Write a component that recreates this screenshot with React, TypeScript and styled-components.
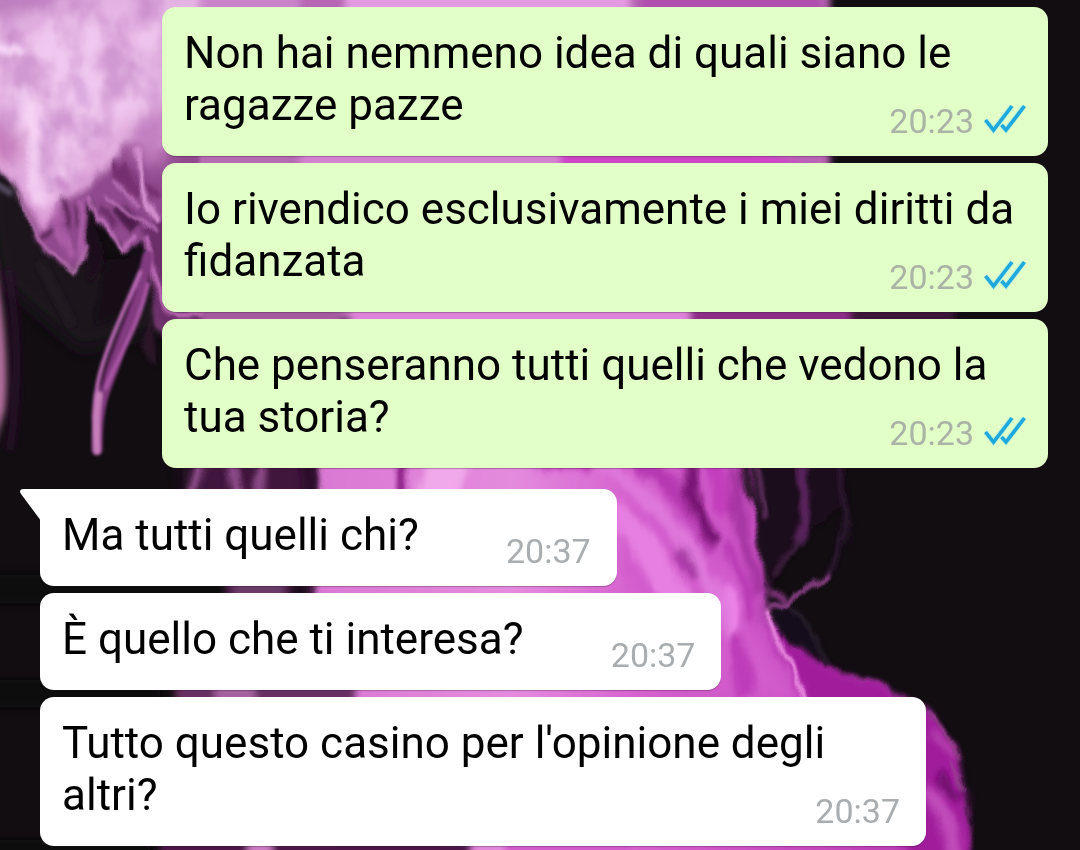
import React from "react";
import styled, { createGlobalStyle } from "styled-components";

const GlobalStyle = createGlobalStyle`
  * { box-sizing: border-box; }
  body {
    margin: 0;
    background: #110d11;
    font-family: Roboto, "Liberation Sans", sans-serif;
  }
`;

type Side = "sent" | "received";

interface Message {
  text: string;
  time: string;
}

const sent: Message[] = [
  { text: "Non hai nemmeno idea di quali siano le ragazze pazze", time: "20:23" },
  { text: "Io rivendico esclusivamente i miei diritti da fidanzata", time: "20:23" },
  { text: "Che penseranno tutti quelli che vedono la tua storia?", time: "20:23" },
];

const received: Message[] = [
  { text: "Ma tutti quelli chi?", time: "20:37" },
  { text: "È quello che ti interesa?", time: "20:37" },
  { text: "Tutto questo casino per l'opinione degli altri?", time: "20:37" },
];

const Chat = styled.main`
  position: relative;
  isolation: isolate;
  overflow: hidden;
  min-height: 100vh;
  display: flex;
  flex-direction: column;
  gap: 21px;
  padding: 7px 32px 4px 40px;
`;

const Wallpaper = styled.svg`
  position: absolute;
  inset: 0;
  width: 100%;
  height: 100%;
  z-index: -1;
`;

const Group = styled.ol<{ $side: Side }>`
  list-style: none;
  margin: 0;
  padding: 0;
  display: flex;
  flex-direction: column;
  align-items: ${(p) => (p.$side === "sent" ? "flex-end" : "flex-start")};
  gap: 7px;
`;

const Bubble = styled.li<{ $side: Side; $tail: boolean }>`
  position: relative;
  display: grid;
  max-width: calc(100% - 122px);
  padding: 20px 22px 15px 22px;
  border-radius: ${(p) => (p.$tail ? "0 14px 14px 14px" : "14px")};
  background: ${(p) => (p.$side === "sent" ? "#e1ffc7" : "#ffffff")};
  color: ${(p) => (p.$side === "sent" ? "#a9b3a6" : "#a9adaf")};
  box-shadow: 0 1px 1px rgba(40, 20, 40, 0.3);
`;

const Text = styled.p`
  grid-area: 1 / 1;
  margin: 0 0 10px;
  color: #000;
  font-size: 44px;
  line-height: 52px;
`;

/* Keeps the end of the last line clear of the time. */
const Reserve = styled.span<{ $side: Side }>`
  display: inline-block;
  width: ${(p) => (p.$side === "sent" ? 200 : 176)}px;
`;

const Meta = styled.footer<{ $side: Side }>`
  grid-area: 1 / 1;
  place-self: end;
  display: flex;
  align-items: center;
  gap: 10px;
  padding-right: ${(p) => (p.$side === "sent" ? 0 : 4)}px;
  font-size: 34px;
  line-height: 40px;
`;

const Ticks = styled.svg`
  width: 42px;
  height: 34px;
`;

const Tail = styled.svg`
  position: absolute;
  top: 0;
  left: -20px;
  width: 21px;
  height: 31px;
`;

function ReadTicks() {
  return (
    <Ticks viewBox="0 0 42 34" role="img" aria-label="Letto">
      <g fill="none" stroke="#8fe3f5" strokeWidth="5.500" opacity="0.45">
        <path d="M1.500 16 9.500 26 28 2" />
        <path d="M17.500 21 22 26 40 2" />
      </g>
      <g fill="none" stroke="#1fa8dc" strokeWidth="3.600">
        <path d="M1.500 16 9.500 26 28 2" />
        <path d="M17.500 21 22 26 40.500 2" />
      </g>
    </Ticks>
  );
}

function Messages({ items, side }: { items: Message[]; side: Side }) {
  return (
    <Group $side={side}>
      {items.map((m, i) => {
        const tail = side === "received" && i === 0;
        return (
          <Bubble key={m.text} $side={side} $tail={tail}>
            {tail && (
              <Tail viewBox="0 0 21 31" aria-hidden="true">
                <path d="M21 0H3C0 0-.8 2.400 1 5L20 30.500H21Z" fill="#fff" />
              </Tail>
            )}
            <Text>
              {m.text}
              <Reserve $side={side} />
            </Text>
            <Meta $side={side}>
              <time>{m.time}</time>
              {side === "sent" && <ReadTicks />}
            </Meta>
          </Bubble>
        );
      })}
    </Group>
  );
}

function Blur({ id, amount }: { id: string; amount: number }) {
  return (
    <filter id={id} filterUnits="userSpaceOnUse" x="-60" y="-60" width="1200" height="970">
      <feGaussianBlur stdDeviation={amount} />
    </filter>
  );
}

function SmokeWallpaper() {
  return (
    <Wallpaper viewBox="0 0 1080 850" preserveAspectRatio="xMidYMid slice" aria-hidden="true">
      <defs>
        <Blur id="soft1" amount={1.4} />
        <Blur id="soft2" amount={2.2} />
        <Blur id="soft3" amount={3.5} />
        <Blur id="soft9" amount={9} />
        <filter
          id="wisps"
          filterUnits="userSpaceOnUse"
          x="-60"
          y="-60"
          width="1200"
          height="970"
          colorInterpolationFilters="sRGB"
        >
          <feTurbulence type="fractalNoise" baseFrequency="0.035 0.018" numOctaves="3" seed="7" result="noise" />
          <feDisplacementMap in="SourceGraphic" in2="noise" scale="18" xChannelSelector="R" yChannelSelector="G" />
        </filter>
        <filter id="mottle" filterUnits="userSpaceOnUse" x="-10" y="-10" width="200" height="260" colorInterpolationFilters="sRGB">
          <feTurbulence type="fractalNoise" baseFrequency="0.03 0.02" numOctaves="4" seed="3" />
          <feColorMatrix values="0 0 0 0 0.74  0 0 0 0 0.48  0 0 0 0 0.75  3 0 0 0 -1.250" />
          <feComposite in2="SourceGraphic" operator="in" />
          <feGaussianBlur stdDeviation="1.500" />
        </filter>
        <linearGradient id="cloud" x1="0" y1="0" x2="0" y2="1">
          <stop offset="0" stopColor="#d79ed6" />
          <stop offset="0.2" stopColor="#e6b6e5" />
          <stop offset="0.75" stopColor="#e2abde" />
          <stop offset="1" stopColor="#d691d0" />
        </linearGradient>
        <linearGradient id="body" x1="0" y1="0" x2="1" y2="0">
          <stop offset="0" stopColor="#d978d2" />
          <stop offset="0.3" stopColor="#e48bde" />
          <stop offset="0.5" stopColor="#d45fcd" />
          <stop offset="1" stopColor="#b634b1" />
        </linearGradient>
      </defs>
      <rect width="1080" height="850" fill="#110d11" />

      {/* dim haze left of the column */}
      <path d="M-20 160 26 190 60 240 110 272 165 255V330L80 350 0 280Z" fill="#1f171f" filter="url(#soft9)" />
      <path d="M-8 250C3 300 10 370 5 410L-8 450Z" fill="#b5709f" filter="url(#soft3)" />
      <path d="M8 270C18 330 20 380 10 450" stroke="#2b112a" strokeWidth="7" fill="none" filter="url(#soft3)" />
      <path d="M40 262 72 325" stroke="#231b24" strokeWidth="7" fill="none" filter="url(#soft3)" />
      <path d="M-4 184 12 194" stroke="#5a5066" strokeWidth="6" fill="none" filter="url(#soft2)" />

      {/* strips that show between the upper bubbles */}
      <g filter="url(#soft3)">
        <path d="M150-20H830V320H240L160 330Z" fill="#b765b4" />
        <path d="M150-20H300V12H150Z" fill="#c983cb" />
        <path d="M345-20H630V16H345Z" fill="#e49ae2" />
        <path d="M640-20H812L828 16H640Z" fill="#b04fae" />
        <path d="M172 148H300V172H172Z" fill="#b56cb2" />
        <path d="M300 148H560V172H300Z" fill="#d482d0" />
        <path d="M560 148H750L830 172H560Z" fill="#cc45c7" />
        <path d="M155 304H340V328H155Z" fill="#a55a9f" />
        <path d="M350 304H690V328H350Z" fill="#dd83d9" />
        <path d="M690 304H850V328H690Z" fill="#8c2f88" />
        <path d="M850 304H955V328H850Z" fill="#3a1638" />
      </g>

      {/* plume hanging in the upper left */}
      <g filter="url(#wisps)">
        <g filter="url(#soft2)">
          <path d="M70 90H200V250L166 262 142 240 124 248 104 234 90 198 86 250 74 272 54 260 34 234 22 190-20 150V90Z" fill="#8f4a8c" />
          <path d="M142 225H200V345H170C152 315 152 290 146 262Z" fill="#6c2d69" />
        </g>
        <path
          d="M-40-40H200V150L160 146 135 142 112 162 94 184 78 196 58 200 48 226 38 226 27 205 16 184-40 140Z"
          fill="url(#cloud)"
          filter="url(#soft3)"
        />
        <g filter="url(#soft9)">
          <path d="M35 35 90 5 120 50 155 20 165 90 90 150 62 190 42 212 28 150 0 95V45Z" fill="#f0c8ee" />
          <path d="M-15 14 45 12 70-12H-15Z" fill="#b878b8" />
          <path d="M-15 128 18 124 22 165-15 150Z" fill="#c679b7" />
          <path d="M135 130 168 100V165L136 160Z" fill="#c07dbe" />
        </g>
      </g>
      <path
        d="M-5-5H165V125L112 155 90 182 50 194 30 190 0 150Z"
        fill="#fff"
        opacity="0.6"
        filter="url(#mottle)"
      />
      <g fill="none" filter="url(#wisps)">
        <g filter="url(#soft3)" strokeLinecap="round">
          <path d="M4 36 38 26 58 12M95 8 125 40 158 65" stroke="#c080c4" strokeWidth="4" opacity="0.4" />
          <path d="M-4 46 20 52" stroke="#fbe0fc" strokeWidth="8" />
          <path d="M25 90C31 125 28 150 40 200" stroke="#fbdcfa" strokeWidth="8" opacity="0.8" />
          <path d="M80 80 84 105M40 125 46 132" stroke="#c48bd0" strokeWidth="9" opacity="0.6" />
          <path d="M58 182 64 190" stroke="#b76cb8" strokeWidth="10" opacity="0.6" />
        </g>
        <g filter="url(#soft2)" strokeLinecap="round">
          <path d="M91 204C96 220 96 238 100 268L90 278 84 262 88 230Z" fill="#1c101d" stroke="#1c101d" strokeWidth="2" />
          <path d="M62 204 66 226M40 234 58 226M78 210 78 226" stroke="#5d2558" strokeWidth="5" />
          <path d="M54 206C55 230 66 238 70 258M82 202C84 222 79 242 78 262" stroke="#b967b4" strokeWidth="4" />
          <path d="M104 203 118 222 112 230 100 212Z" fill="#6c2f69" />
          <path d="M113 208 126 202 144 222 128 230Z" fill="#4f1e4e" />
          <path d="M150 186 160 198M124 168 136 192M114 166 126 180" stroke="#742f70" strokeWidth="7" />
          <path d="M106 262 124 254 142 240 144 268 125 312 96 330Z" fill="#150f18" />
          <path d="M156 320V370L138 345Z" fill="#2b1328" />
        </g>
        <g filter="url(#soft1)" strokeLinecap="round">
          <path d="M20 194 32 224 48 248 74 273 84 250" stroke="#b873b1" strokeWidth="3" />
          <path d="M89 198 100 222 118 248 134 234" stroke="#bd6fb9" strokeWidth="4" />
          <path d="M110 196 136 216 162 234M116 178 140 206" stroke="#bd73ba" strokeWidth="3" />
          <path d="M139 150C140 178 142 205 162 224" stroke="#d28ecd" strokeWidth="6" />
          <path d="M146 236C148 262 156 300 168 314H200" stroke="#b969b3" strokeWidth="5" />
        </g>
      </g>

      {/* long curl under the plume */}
      <g fill="none" strokeLinecap="round" filter="url(#soft1)">
        <path d="M148 256C136 310 120 350 108 382 98 405 97 428 97 450" stroke="#823b7f" strokeWidth="11" />
        <path d="M140 272C122 315 104 352 98 382 93 405 93 430 96 451" stroke="#bd6bb7" strokeWidth="4" />
        <path d="M148 284C138 330 116 360 106 388" stroke="#a957a4" strokeWidth="4" />
        <path d="M136 290C123 330 109 350 101 390" stroke="#5f1e63" strokeWidth="2" />
        <path d="M99 395C96 415 96 430 97 451" stroke="#c67dba" strokeWidth="7" />
      </g>

      {/* main column, lower half */}
      <path d="M185 450H330V850H240L215 690Z" fill="#40173d" filter="url(#soft9)" />
      <g filter="url(#wisps)">
        <path
          d="M324 450H752C760 520 762 560 766 612 785 645 812 665 860 682 905 692 935 718 957 748 964 790 968 815 974 880H470L340 700 312 590Z"
          fill="url(#body)"
          filter="url(#soft3)"
        />
        <path d="M766 608C790 642 820 664 860 684 900 690 938 722 955 750 962 785 966 810 976 880H915L850 720 800 700Z" fill="#a01b9b" filter="url(#soft3)" />
        <path d="M640 500C700 530 735 560 752 620L798 700H700L620 560Z" fill="#d25bcc" filter="url(#soft9)" />
        <g fill="none" strokeLinecap="round" filter="url(#soft3)">
          <path d="M188 500 205 455M228 455 240 500M264 455 260 500" stroke="#9a5596" strokeWidth="9" />
          <path d="M308 455V500" stroke="#29102a" strokeWidth="18" />
          <path d="M404 455 402 500" stroke="#8b1b85" strokeWidth="11" />
          <path d="M450 455 435 505" stroke="#f0a9ea" strokeWidth="34" />
          <path d="M540 460H600" stroke="#c241bc" strokeWidth="14" />
          <path d="M600 462C650 490 700 545 732 635" stroke="#df78dc" strokeWidth="14" />
          <path d="M620 520C650 545 665 575 678 600" stroke="#e67fe1" strokeWidth="28" />
          <path d="M640 462C675 485 696 515 708 545" stroke="#b537b0" strokeWidth="16" />
          <path d="M688 470C685 500 700 520 712 542" stroke="#6e0f6b" strokeWidth="11" />
          <path d="M716 465 724 505" stroke="#c23cbc" strokeWidth="20" />
          <path d="M738 472C736 530 750 550 757 590" stroke="#a2309e" strokeWidth="10" />
          <path d="M682 552 694 576" stroke="#9f2d9c" strokeWidth="9" />
          <path d="M727 550C736 575 748 590 754 615" stroke="#b739b2" strokeWidth="9" />
          <path d="M727 590 737 630" stroke="#ee86ea" strokeWidth="9" />
          <path d="M738 640 745 690" stroke="#bd3bb8" strokeWidth="14" />
          <path d="M935 795C948 820 955 840 956 860" stroke="#c04bb9" strokeWidth="16" />
          <path d="M935 738 952 752" stroke="#b23eac" strokeWidth="10" />
          <path d="M942 776 958 796" stroke="#6c0869" strokeWidth="9" />
        </g>
        <g filter="url(#soft2)">
          <path d="M748 455C750 500 760 530 764 590L782 566 806 535 848 500V455Z" fill="#1d0e1f" />
          <path d="M790 600 770 614 790 640 832 664Z" fill="#180f1a" />
        </g>
        <g fill="none" strokeLinecap="round" filter="url(#soft2)">
          <path d="M806 455C802 490 812 515 800 540" stroke="#57235a" strokeWidth="12" />
          <path d="M800 540 772 574" stroke="#3f2040" strokeWidth="5" />
          <path d="M838 460C850 510 848 550 828 572" stroke="#2b182d" strokeWidth="6" />
          <path d="M744 465C747 490 752 505 758 520" stroke="#1b081d" strokeWidth="6" />
          <path d="M754 465C758 485 760 500 763 515" stroke="#6f386d" strokeWidth="4" />
          <path d="M770 594 786 598" stroke="#7b3277" strokeWidth="7" />
          <path d="M792 606C805 622 820 640 828 662" stroke="#2c222e" strokeWidth="4" />
        </g>
        <g fill="none" strokeLinecap="round" filter="url(#soft1)">
          <path d="M828 574C812 584 800 590 788 602L770 607" stroke="#843c80" strokeWidth="5" />
          <path d="M767 612C782 642 796 665 802 710" stroke="#e885df" strokeWidth="5" />
          <path d="M930 718C946 730 954 742 960 756M950 762C960 774 962 780 964 788" stroke="#9a4290" strokeWidth="3" />
        </g>
      </g>

      {/* seams between and below the lower bubbles */}
      <g filter="url(#soft3)">
        <path d="M-20 575H225V603H-20Z" fill="#110d11" />
        <path d="M232 575H285V603H232Z" fill="#6b3a69" />
        <path d="M292 575H308V603H292Z" fill="#1d0c1d" />
        <path d="M-20 680H160V707H-20Z" fill="#110d11" />
        <path d="M175 680H355V707H175Z" fill="#662d62" />
        <path d="M215 680H255V707H215Z" fill="#a4609f" />
        <path d="M-20 840H150V870H-20Z" fill="#110d11" />
        <path d="M160 840H470V870H160Z" fill="#4d1849" />
        <path d="M248 840H272V870H248Z" fill="#cb7cc5" />
        <path d="M505 840H630V870H505Z" fill="#d15bcb" />
      </g>
    </Wallpaper>
  );
}

export default function App() {
  return (
    <>
      <GlobalStyle />
      <Chat>
        <SmokeWallpaper />
        <Messages items={sent} side="sent" />
        <Messages items={received} side="received" />
      </Chat>
    </>
  );
}
